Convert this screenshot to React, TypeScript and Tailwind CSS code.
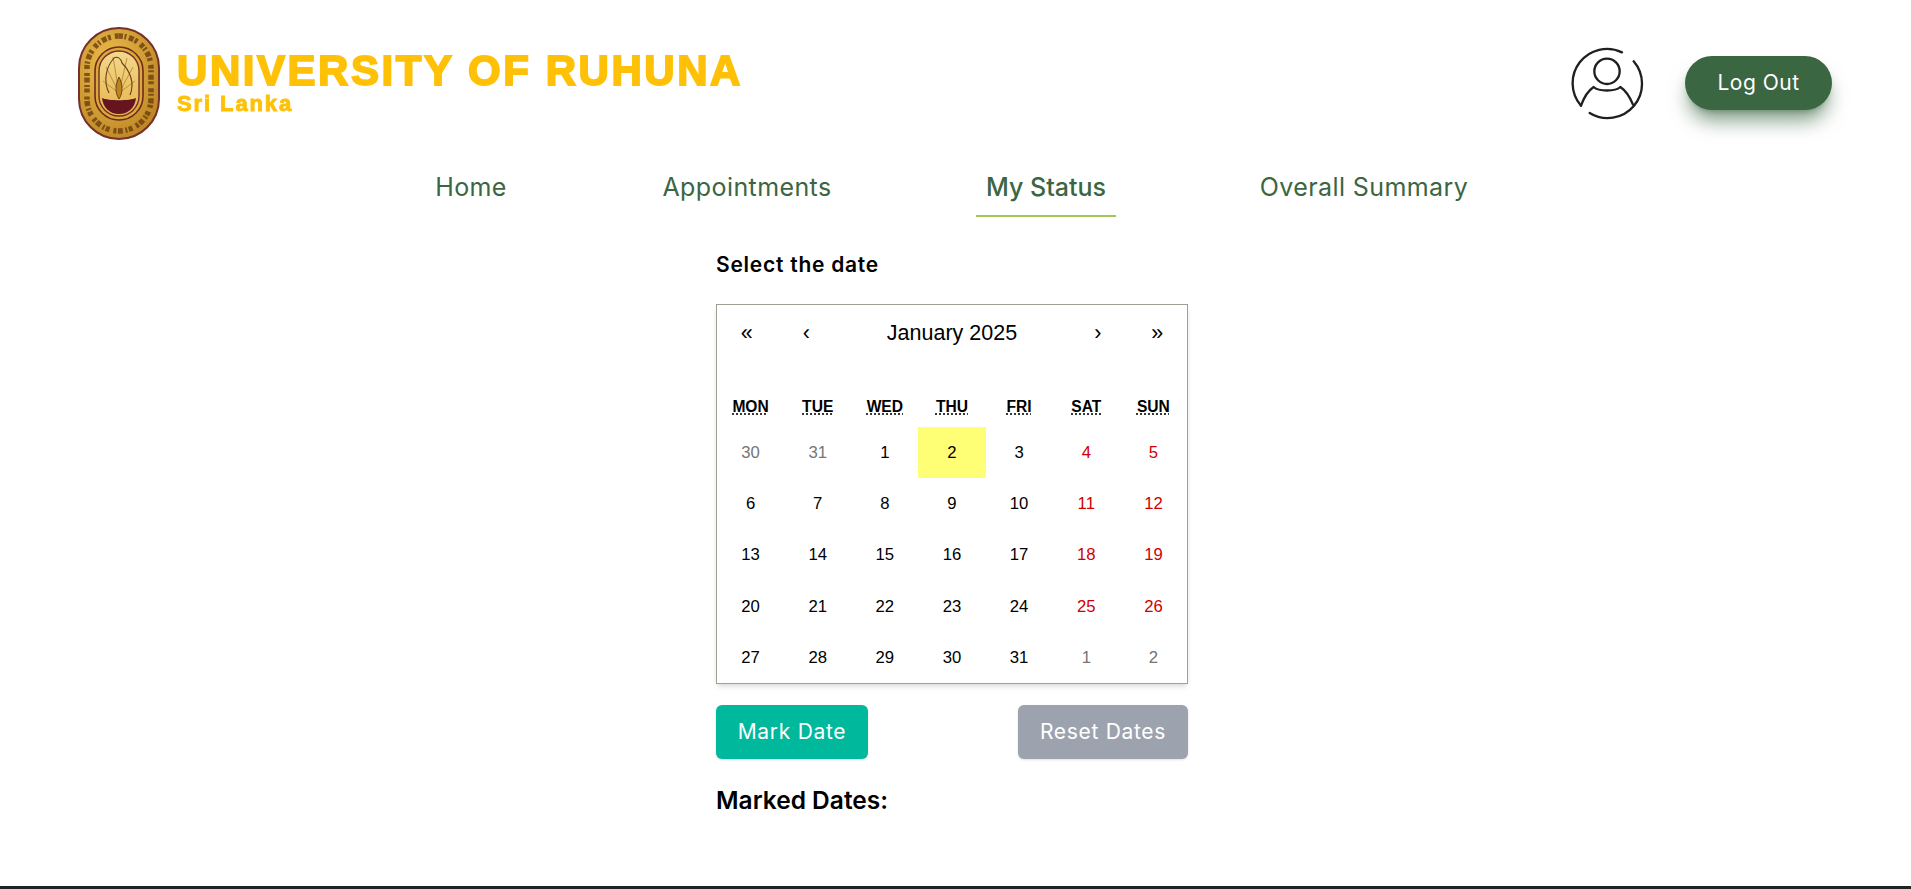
import React from 'react'

const weekDays = ['MON', 'TUE', 'WED', 'THU', 'FRI', 'SAT', 'SUN']

const days = [
  { d: 30, c: 'text-[#757575]' }, { d: 31, c: 'text-[#757575]' }, { d: 1 }, { d: 2, active: true }, { d: 3 }, { d: 4, c: 'text-[#d10000]' }, { d: 5, c: 'text-[#d10000]' },
  { d: 6 }, { d: 7 }, { d: 8 }, { d: 9 }, { d: 10 }, { d: 11, c: 'text-[#d10000]' }, { d: 12, c: 'text-[#d10000]' },
  { d: 13 }, { d: 14 }, { d: 15 }, { d: 16 }, { d: 17 }, { d: 18, c: 'text-[#d10000]' }, { d: 19, c: 'text-[#d10000]' },
  { d: 20 }, { d: 21 }, { d: 22 }, { d: 23 }, { d: 24 }, { d: 25, c: 'text-[#d10000]' }, { d: 26, c: 'text-[#d10000]' },
  { d: 27 }, { d: 28 }, { d: 29 }, { d: 30 }, { d: 31 }, { d: 1, c: 'text-[#757575]' }, { d: 2, c: 'text-[#757575]' },
]

function Logo() {
  return (
    <svg width="82" height="113" viewBox="0 0 82 113" className="shrink-0 blur-[0.5px]">
      <defs>
        <radialGradient id="gold" cx="40%" cy="35%" r="80%">
          <stop offset="0%" stopColor="#eec24f" />
          <stop offset="100%" stopColor="#b67d1d" />
        </radialGradient>
        <linearGradient id="core" x1="0" y1="0" x2="0" y2="1">
          <stop offset="0%" stopColor="#f3d98c" />
          <stop offset="100%" stopColor="#e3b54a" />
        </linearGradient>
      </defs>
      <rect x="1" y="1" width="80" height="111" rx="40" fill="url(#gold)" stroke="#74302a" strokeWidth="2" />
      <rect x="9" y="9" width="64" height="95" rx="32" fill="none" stroke="#6d3d10" strokeWidth="5.5" strokeDasharray="4 1.5 2 2.5 5 1.5 3 4" opacity="0.8" />
      <rect x="17" y="20" width="48" height="73" rx="24" fill="#dba83a" stroke="#6e2b1c" strokeWidth="1.6" />
      <rect x="21" y="24" width="40" height="65" rx="20" fill="url(#core)" stroke="#74302a" strokeWidth="1.4" />
      <g stroke="#b58a34" strokeWidth="0.9">
        <path d="M41 66 L28 40" />
        <path d="M41 66 L35 30" />
        <path d="M41 66 L49 31" />
        <path d="M41 66 L55 40" />
        <path d="M41 66 L25 54" />
        <path d="M41 66 L57 54" />
      </g>
      <path d="M36 31 C28 40 25 54 31 66 M36 31 C39 29 43 31 44 36 C52 44 57 56 52 68" fill="none" stroke="#6e3a1a" strokeWidth="1.1" />
      <path d="M41 50 C37 58 37 66 41 72 C45 66 45 58 41 50 Z" fill="#bb8420" stroke="#6e3a1a" strokeWidth="0.9" />
      <path d="M24 71 C30 74 52 74 58 71 C57 81 50 87 41 87 C32 87 25 81 24 71 Z" fill="#661420" />
    </svg>
  )
}

function UserIcon() {
  return (
    <svg width="74" height="74" viewBox="89 49 222 222" fill="none" stroke="#1f1f1f" strokeWidth="7" strokeLinecap="round" strokeLinejoin="round">
      <path d="M280 95 A103 103 0 0 1 148 250" />
      <path d="M122 228 A103 103 0 0 1 245 68" />
      <circle cx="200" cy="125" r="38" />
      <path d="M122 228 C132 200 145 182 160 172 C175 186 225 186 240 172 C255 182 268 200 278 225" />
    </svg>
  )
}

export default function App() {
  return (
    <div className="flex h-screen flex-col overflow-hidden bg-white font-['Inter',sans-serif]">
      <header className="flex h-[150px] items-start justify-between pl-[78px] pr-[79px] pt-[27px]">
        <div className="flex items-start gap-[17px]">
          <Logo />
          <div className="pt-[24px] font-['Liberation_Sans',sans-serif] font-bold text-[#ffc107] blur-[0.3px]">
            <div className="text-[42px] leading-[40px] tracking-[2.55px] [-webkit-text-stroke:1.8px_#ffc107]">UNIVERSITY OF RUHUNA</div>
            <div className="mt-[3px] text-[22px] leading-[20px] tracking-[1.9px] [-webkit-text-stroke:0.9px_#ffc107]">Sri Lanka</div>
          </div>
        </div>
        <div className="flex items-center gap-[41px] pt-[19px]">
          <UserIcon />
          <button className="h-[54px] w-[147px] rounded-full bg-[#3a6642] text-[21px] tracking-[0.5px] text-white shadow-[0_14px_20px_-4px_rgba(58,102,66,0.65),0_4px_6px_-4px_rgba(58,102,66,0.6)]">
            Log Out
          </button>
        </div>
      </header>

      <nav className="flex h-[67px] items-start justify-center pr-[7px] text-[25px] tracking-[0.4px] text-[#3a6642]">
        <a className="w-[72px] whitespace-nowrap pt-[19px] text-center">Home</a>
        <a className="ml-[154px] w-[172px] whitespace-nowrap pt-[19px] text-center">Appointments</a>
        <a className="ml-[143px] h-[67px] w-[140px] whitespace-nowrap border-b-2 border-[#a3c755] pt-[19px] text-center font-medium tracking-[0px]">My Status</a>
        <a className="ml-[143px] w-[210px] whitespace-nowrap pt-[19px] text-center">Overall Summary</a>
      </nav>

      <main className="ml-[716px] w-[472px] flex-1 pt-[33px]">
        <h2 className="text-[21px] leading-[30px] font-semibold tracking-[0.75px] text-black">Select the date</h2>
        <div className="mt-[24px] border border-[#a0a096] bg-white font-['Liberation_Sans',sans-serif] text-black shadow-md">
          <div className="mb-[26px] flex h-[56px] items-center text-center text-[21.5px]">
            <button className="w-[59.5px]">«</button>
            <button className="w-[59.5px]">‹</button>
            <span className="flex-1">January 2025</span>
            <button className="w-[59.5px]">›</button>
            <button className="w-[59.5px]">»</button>
          </div>
          <div className="grid h-[40px] grid-cols-7 items-center text-center text-[15.6px] font-bold">
            {weekDays.map((w) => (
              <abbr key={w} className="underline decoration-dotted">{w}</abbr>
            ))}
          </div>
          <div className="grid auto-rows-[51.2px] grid-cols-7 text-[16.7px]">
            {days.map((x, i) => (
              <div key={i} className={`flex items-center justify-center ${x.c ?? ''} ${x.active ? 'bg-[#ffff76]' : ''}`}>
                {x.d}
              </div>
            ))}
          </div>
        </div>
        <div className="mt-[21px] flex justify-between text-[21px] tracking-[0.7px] text-white">
          <button className="h-[54px] w-[152px] rounded-md bg-[#00b89c] shadow-sm">Mark Date</button>
          <button className="h-[54px] w-[170px] rounded-md bg-[#9ca3af] shadow-sm">Reset Dates</button>
        </div>
        <h3 className="mt-[23px] text-[24.5px] leading-[37px] font-semibold text-black">Marked Dates:</h3>
      </main>

      <footer className="h-[3px] bg-[#222222]" />
    </div>
  )
}
